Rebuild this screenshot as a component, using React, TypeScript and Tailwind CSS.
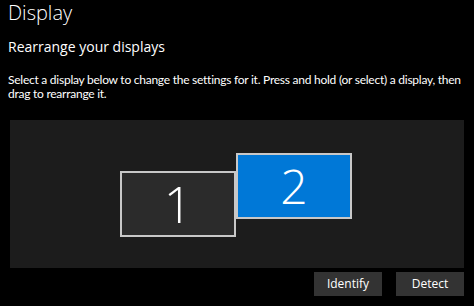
import * as React from "react";

const App: React.FC = () => {
    return (
        <div className="w-[474px] h-[306px] overflow-hidden bg-black text-white font-['Open_Sans','Noto_Sans',sans-serif]">
            <div className="px-2 pt-px">
                <h1 className="text-[20px] leading-[23px] font-light">Display</h1>
                <h2 className="mt-[13px] text-[14px] leading-[20px] font-normal">Rearrange your displays</h2>
                <p className="mt-[16px] text-[12px] leading-[14px] text-white whitespace-nowrap tracking-[-0.25px] font-['Lato','Open_Sans',sans-serif]">
                    Select a display below to change the settings for it. Press and hold (or select) a display, then
                    <br />
                    drag to rearrange it.
                </p>
            </div>

            <section className="ml-[10px] mt-[19px] w-[454px] h-[148px] bg-[#1c1c1c] relative">
                <div className="absolute left-[110px] top-[51px] w-[116px] h-[66px] bg-[#2b2b2b] border-2 border-[#c8c8c8] flex items-center justify-center">
                    <span className="text-[50px] leading-none font-light">1</span>
                </div>
                <div className="absolute left-[226px] top-[33px] w-[116px] h-[66px] bg-[#0078d7] border-2 border-[#c8c8c8] flex items-center justify-center">
                    <span className="text-[48px] leading-none font-light">2</span>
                </div>
            </section>

            <div className="mt-[4px] mr-[10px] flex justify-end gap-[14px]">
                <button className="w-[68px] h-[24px] bg-[#333333] text-[12px] text-white">Identify</button>
                <button className="w-[68px] h-[24px] bg-[#333333] text-[12px] text-white">Detect</button>
            </div>
        </div>
    );
};

export default App;
